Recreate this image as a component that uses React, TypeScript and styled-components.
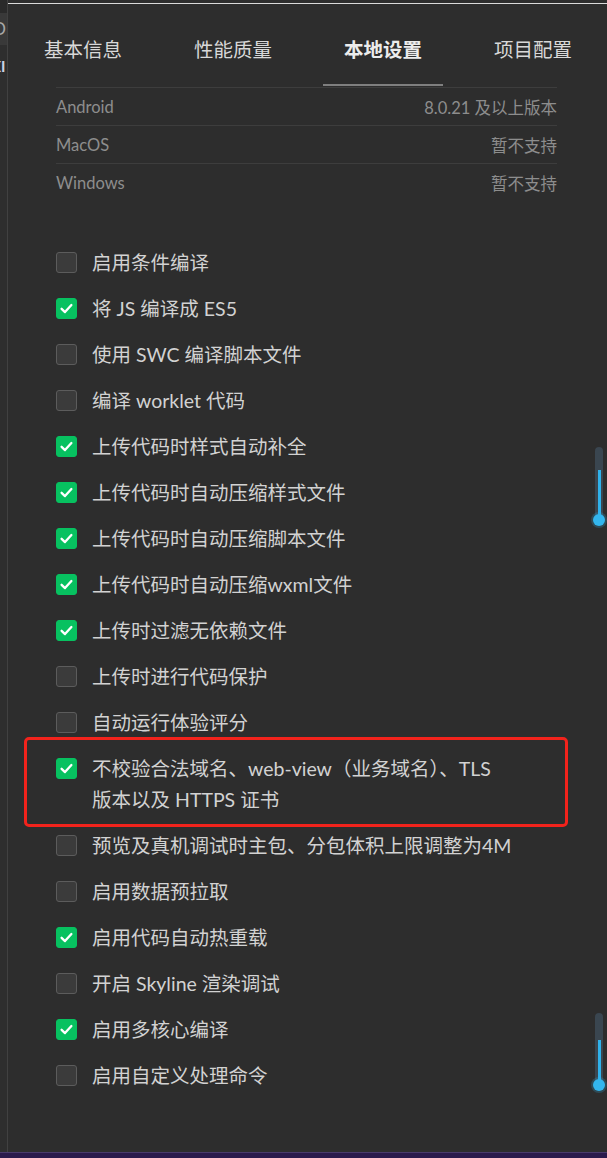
import React from "react";
import styled, { createGlobalStyle } from "styled-components";

const GlobalStyle = createGlobalStyle`
  html, body {
    margin: 0;
    padding: 0;
    background: #2d2d2d;
  }
  * { box-sizing: border-box; }
`;

const FONT = `Lato, "Noto Sans CJK SC", sans-serif`;

const Frame = styled.div`
  width: 607px;
  height: 1158px;
  display: flex;
  flex-direction: column;
  overflow: hidden;
  font-family: ${FONT};
`;

const Main = styled.div`
  flex: 1;
  min-height: 0;
  display: flex;
`;

const SideStrip = styled.div`
  width: 8px;
  flex: none;
  display: flex;
  flex-direction: column;
  background: #2e2e2e;
  border-right: 1px solid #414141;
  overflow: hidden;
`;

const StripTop = styled.div`
  height: 13px;
  background: #2a2a2a;
`;

const StripHeader = styled.div`
  height: 32px;
  background: #393939;
  color: #a8a8a8;
  font-size: 17px;
  line-height: 32px;
  margin-left: -7px;
  white-space: nowrap;
`;

const StripText = styled.div`
  margin-top: 11px;
  margin-left: -9px;
  color: #c9d3e6;
  font-size: 15px;
  line-height: 20px;
  font-weight: 700;
  white-space: nowrap;
`;

const Panel = styled.div`
  flex: 1;
  position: relative;
  background: #2d2d2d;
  padding-top: 3px;
  display: flex;
  flex-direction: column;
`;

const TabBar = styled.div`
  display: grid;
  grid-template-columns: repeat(4, 150px);
  border-top: 1px solid #dadada;
`;

const Tab = styled.div<{ $active?: boolean }>`
  margin: 0 15px;
  padding: 30px 0 18px;
  text-align: center;
  font-size: 19.5px;
  line-height: 32px;
  white-space: nowrap;
  color: ${(p) => (p.$active ? "#ececec" : "#d8d8d8")};
  font-weight: ${(p) => (p.$active ? 700 : 400)};
  border-bottom: 2px solid ${(p) => (p.$active ? "#7f7f7f" : "transparent")};
`;

const Content = styled.div`
  padding: 0 51px 0 48px;
  display: flex;
  flex-direction: column;
`;

const InfoTable = styled.div`
  margin-top: 1px;
  border-top: 1px solid #3d3d3d;
  display: flex;
  flex-direction: column;
`;

const InfoRow = styled.div`
  height: 38px;
  display: flex;
  align-items: center;
  justify-content: space-between;
  font-size: 16.5px;
  color: #8d8d8d;
  border-bottom: 1px solid #3d3d3d;
  &:last-child {
    border-bottom: none;
  }
`;

const OptionList = styled.div`
  margin-top: 45px;
  display: flex;
  flex-direction: column;
  gap: 15px;
`;

const Option = styled.div`
  position: relative;
  display: flex;
  align-items: flex-start;
  gap: 15px;
`;

const Box = styled.span<{ $checked?: boolean }>`
  flex: none;
  width: 21px;
  height: 21px;
  margin-top: 5px;
  border-radius: 3px;
  display: flex;
  align-items: center;
  justify-content: center;
  background: ${(p) => (p.$checked ? "#07c160" : "#3b3b3b")};
  border: 1px solid ${(p) => (p.$checked ? "#07c160" : "#5c5c5c")};
`;

const Label = styled.span`
  font-size: 19.5px;
  line-height: 31px;
  color: #d2d2d2;
  white-space: nowrap;
`;

const Highlight = styled.span`
  position: absolute;
  top: -16px;
  bottom: -12px;
  left: -32px;
  right: -11px;
  border: 3px solid #f2231c;
  border-radius: 5px;
  pointer-events: none;
`;

const Indicator = styled.div`
  position: absolute;
  right: 5px;
  width: 8px;
  border-radius: 4px;
  background: #3a4650;
`;

const IndicatorFill = styled.div`
  position: absolute;
  left: 2.5px;
  bottom: 0;
  width: 3px;
  background: #2fb2ec;
`;

const Knob = styled.div`
  position: absolute;
  left: 50%;
  bottom: -6px;
  width: 12px;
  height: 12px;
  margin-left: -6px;
  border-radius: 50%;
  background: #33b6ee;
  box-shadow: 0 0 0 2px rgba(51, 182, 238, 0.22);
`;

const BottomBar = styled.div`
  height: 6px;
  flex: none;
  background: #2b1a4c;
  border-top: 1px solid #4a3b6c;
`;

const Check = () => (
  <svg width="17" height="17" viewBox="0 0 17 17" fill="none">
    <path
      d="M3.6 8.8 L7 12.1 L13.4 5"
      stroke="#ffffff"
      strokeWidth="2.3"
      strokeLinecap="round"
      strokeLinejoin="round"
    />
  </svg>
);

const tabs = ["基本信息", "性能质量", "本地设置", "项目配置"];

const info: [string, string][] = [
  ["Android", "8.0.21 及以上版本"],
  ["MacOS", "暂不支持"],
  ["Windows", "暂不支持"],
];

type Opt = { label: React.ReactNode; checked: boolean; marked?: boolean };

const options: Opt[] = [
  { label: "启用条件编译", checked: false },
  { label: "将 JS 编译成 ES5", checked: true },
  { label: "使用 SWC 编译脚本文件", checked: false },
  { label: "编译 worklet 代码", checked: false },
  { label: "上传代码时样式自动补全", checked: true },
  { label: "上传代码时自动压缩样式文件", checked: true },
  { label: "上传代码时自动压缩脚本文件", checked: true },
  { label: "上传代码时自动压缩wxml文件", checked: true },
  { label: "上传时过滤无依赖文件", checked: true },
  { label: "上传时进行代码保护", checked: false },
  { label: "自动运行体验评分", checked: false },
  {
    label: (
      <>
        不校验合法域名、web-view（业务域名）、TLS
        <br />
        版本以及 HTTPS 证书
      </>
    ),
    checked: true,
    marked: true,
  },
  { label: "预览及真机调试时主包、分包体积上限调整为4M", checked: false },
  { label: "启用数据预拉取", checked: false },
  { label: "启用代码自动热重载", checked: true },
  { label: "开启 Skyline 渲染调试", checked: false },
  { label: "启用多核心编译", checked: true },
  { label: "启用自定义处理命令", checked: false },
];

const indicators = [
  { top: 447, height: 73, fill: 50 },
  { top: 1013, height: 72, fill: 45 },
];

export default function App() {
  return (
    <>
      <GlobalStyle />
      <Frame>
        <Main>
          <SideStrip>
            <StripTop />
            <StripHeader>D</StripHeader>
            <StripText>XI</StripText>
          </SideStrip>
          <Panel>
            <TabBar>
              {tabs.map((t, i) => (
                <Tab key={t} $active={i === 2}>
                  {t}
                </Tab>
              ))}
            </TabBar>
            <Content>
              <InfoTable>
                {info.map(([k, v]) => (
                  <InfoRow key={k}>
                    <span>{k}</span>
                    <span>{v}</span>
                  </InfoRow>
                ))}
              </InfoTable>
              <OptionList>
                {options.map((o, i) => (
                  <Option key={i}>
                    <Box $checked={o.checked}>{o.checked && <Check />}</Box>
                    <Label>{o.label}</Label>
                    {o.marked && <Highlight />}
                  </Option>
                ))}
              </OptionList>
            </Content>
            {indicators.map((ind, i) => (
              <Indicator key={i} style={{ top: ind.top, height: ind.height }}>
                <IndicatorFill style={{ height: ind.fill }} />
                <Knob />
              </Indicator>
            ))}
          </Panel>
        </Main>
        <BottomBar />
      </Frame>
    </>
  );
}
